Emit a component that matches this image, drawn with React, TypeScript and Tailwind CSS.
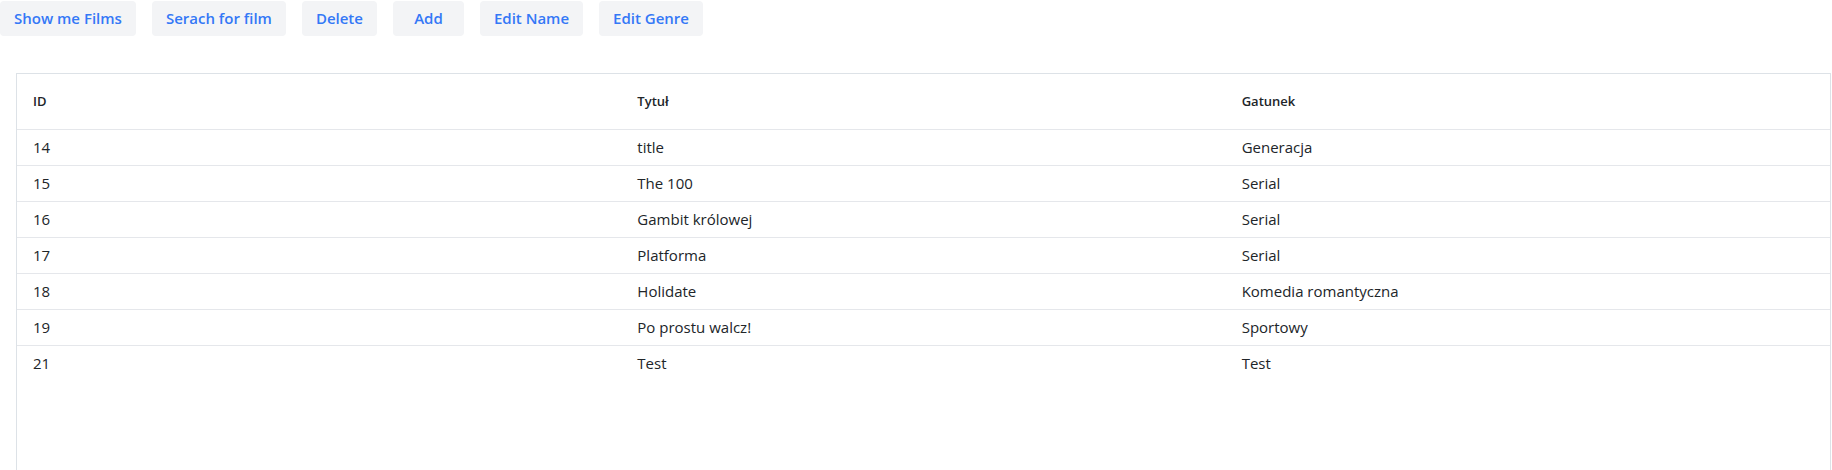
const buttons = ['Show me Films', 'Serach for film', 'Delete', 'Add', 'Edit Name', 'Edit Genre']

const films = [
  { id: 14, title: 'title', genre: 'Generacja' },
  { id: 15, title: 'The 100', genre: 'Serial' },
  { id: 16, title: 'Gambit królowej', genre: 'Serial' },
  { id: 17, title: 'Platforma', genre: 'Serial' },
  { id: 18, title: 'Holidate', genre: 'Komedia romantyczna' },
  { id: 19, title: 'Po prostu walcz!', genre: 'Sportowy' },
  { id: 21, title: 'Test', genre: 'Test' },
]

export default function App() {
  return (
    <div className="min-h-screen bg-white font-['Open_Sans',sans-serif] text-[#212529]">
      {/* Toolbar */}
      <div className="flex gap-4 pt-[1px]">
        {buttons.map((label) => (
          <button
            key={label}
            className="h-[35px] min-w-[71px] px-[14px] rounded bg-[#f3f4f6] text-[#3478f6] text-[15px] font-semibold"
          >
            {label}
          </button>
        ))}
      </div>

      {/* Films table */}
      <div className="mt-[37px] ml-4 mr-[1px] h-[460px] border border-[#dde2e7]">
        <table className="w-full table-fixed border-collapse">
          <thead>
            <tr className="h-[55px] border-b border-[#e5e7eb] text-left">
              <th className="pl-4 text-[13px] font-semibold">ID</th>
              <th className="pl-4 text-[13px] font-semibold">Tytuł</th>
              <th className="pl-4 text-[13px] font-semibold">Gatunek</th>
            </tr>
          </thead>
          <tbody>
            {films.map((film, i) => (
              <tr
                key={film.id}
                className={`h-[36px] text-[15px] ${i < films.length - 1 ? 'border-b border-[#e5e7eb]' : ''}`}
              >
                <td className="pl-4">{film.id}</td>
                <td className="pl-4">{film.title}</td>
                <td className="pl-4">{film.genre}</td>
              </tr>
            ))}
          </tbody>
        </table>
      </div>
    </div>
  )
}
